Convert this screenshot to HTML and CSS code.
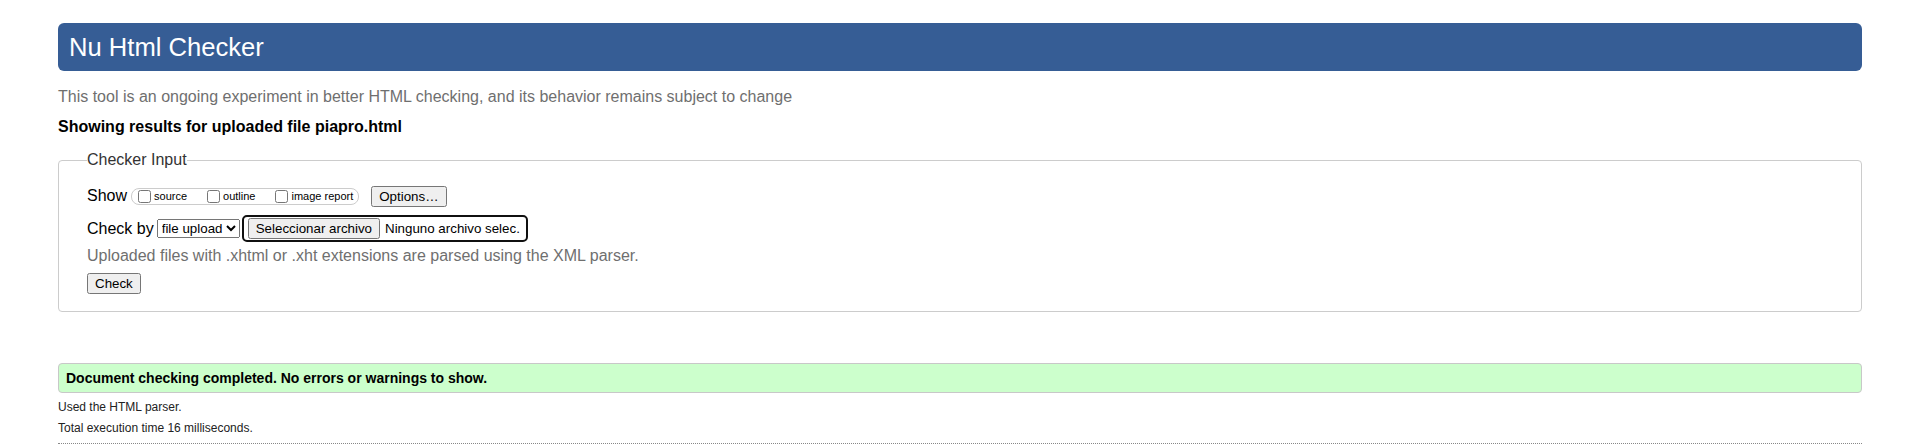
FILE: index.html
```html
<!DOCTYPE html>
<html lang="en">
<head>
<meta charset="utf-8">
<title>Nu Html Checker</title>
<link rel="stylesheet" href="styles.css">
</head>
<body>
<h1 class="title">Nu Html Checker</h1>
<p class="intro">This tool is an ongoing experiment in better HTML checking, and its behavior remains subject to change</p>
<p class="result">Showing results for uploaded file piapro.html</p>
<fieldset class="input">
  <legend>Checker Input</legend>
  <div class="row show-row">
    <span>Show</span>
    <div class="pill">
      <label class="opt"><input type="checkbox"><span>source</span></label>
      <label class="opt"><input type="checkbox"><span>outline</span></label>
      <label class="opt"><input type="checkbox"><span>image report</span></label>
    </div>
    <button class="btn options" type="button">Options…</button>
  </div>
  <div class="row check-row">
    <label class="checkby">Check by</label>
    <select class="sel"><option>file upload</option></select>
    <div class="file">
      <button class="btn pick" type="button">Seleccionar archivo</button>
      <span class="filename">Ninguno archivo selec.</span>
    </div>
  </div>
  <p class="note">Uploaded files with .xhtml or .xht extensions are parsed using the XML parser.</p>
  <div class="submit-row"><button class="btn" type="button">Check</button></div>
</fieldset>
<div class="ok">Document checking completed. No errors or warnings to show.</div>
<p class="meta">Used the HTML parser.</p>
<p class="meta">Total execution time 16 milliseconds.</p>
<hr class="rule">
</body>
</html>
```
FILE: styles.css
```css
html, body {
  margin: 0;
}
body {
  padding: 23px 58px 0;
  font-family: "Liberation Sans", Arial, Helvetica, sans-serif;
  font-size: 16px;
  color: #000;
  background: #fff;
}
.title {
  margin: 0;
  height: 48px;
  box-sizing: border-box;
  padding: 0 11px;
  line-height: 48px;
  font-size: 25.6px;
  font-weight: normal;
  background: #365d95;
  color: #fff;
  border-radius: 6px;
}
.intro {
  margin: 17px 0 0;
  line-height: 18px;
  color: #6f6f6f;
}
.result {
  margin: 12px 0 0;
  line-height: 18px;
  font-weight: bold;
}
.input {
  margin: 15px 0 0;
  padding: 16px 28px 17px;
  border: 1px solid #cccccc;
  border-radius: 4px;
  min-width: 0;
}
.input legend {
  padding: 0;
  font-size: 16px;
  line-height: 18px;
  color: #333;
}
.row {
  display: flex;
  align-items: center;
}
.show-row {
  height: 22px;
}
.pill {
  display: flex;
  align-items: center;
  height: 17px;
  box-sizing: border-box;
  margin-left: 4px;
  padding: 0 5px 0 6px;
  border: 1px solid #cccccc;
  border-radius: 8px;
  gap: 20px;
}
.opt {
  display: flex;
  align-items: center;
  gap: 3px;
  font-size: 11px;
  line-height: 13px;
}
.opt input {
  margin: 0;
  width: 13px;
  height: 13px;
}
.btn {
  font-family: "Liberation Sans", Arial, sans-serif;
  font-size: 13.333px;
}
.options {
  margin-left: 12px;
}
.check-row {
  margin-top: 8px;
  height: 27px;
}
.sel {
  margin-left: 3px;
  font-family: "Liberation Sans", Arial, sans-serif;
  font-size: 13.333px;
}
.file {
  display: flex;
  align-items: center;
  margin-left: 2px;
  height: 27px;
  box-sizing: border-box;
  padding: 0 6px 0 4px;
  border: 2px solid #101010;
  border-radius: 5px;
}
.pick {
  margin: 0;
}
.filename {
  margin-left: 5px;
  font-size: 13.333px;
}
.note {
  margin: 5px 0 0;
  line-height: 18px;
  color: #6f6f6f;
}
.submit-row {
  margin-top: 8px;
  display: flex;
}
.ok {
  margin-top: 51px;
  height: 30px;
  box-sizing: border-box;
  padding: 0 7px;
  line-height: 28px;
  font-size: 14px;
  font-weight: bold;
  background: #ccffcc;
  border: 1px solid #c8c8c8;
  border-radius: 4px;
}
.meta {
  margin: 7px 0 0;
  font-size: 12px;
  line-height: 14px;
  color: #222;
}
.rule {
  margin: 8px 0 0;
  border: 0;
  border-top: 1px dotted #888;
}
```
